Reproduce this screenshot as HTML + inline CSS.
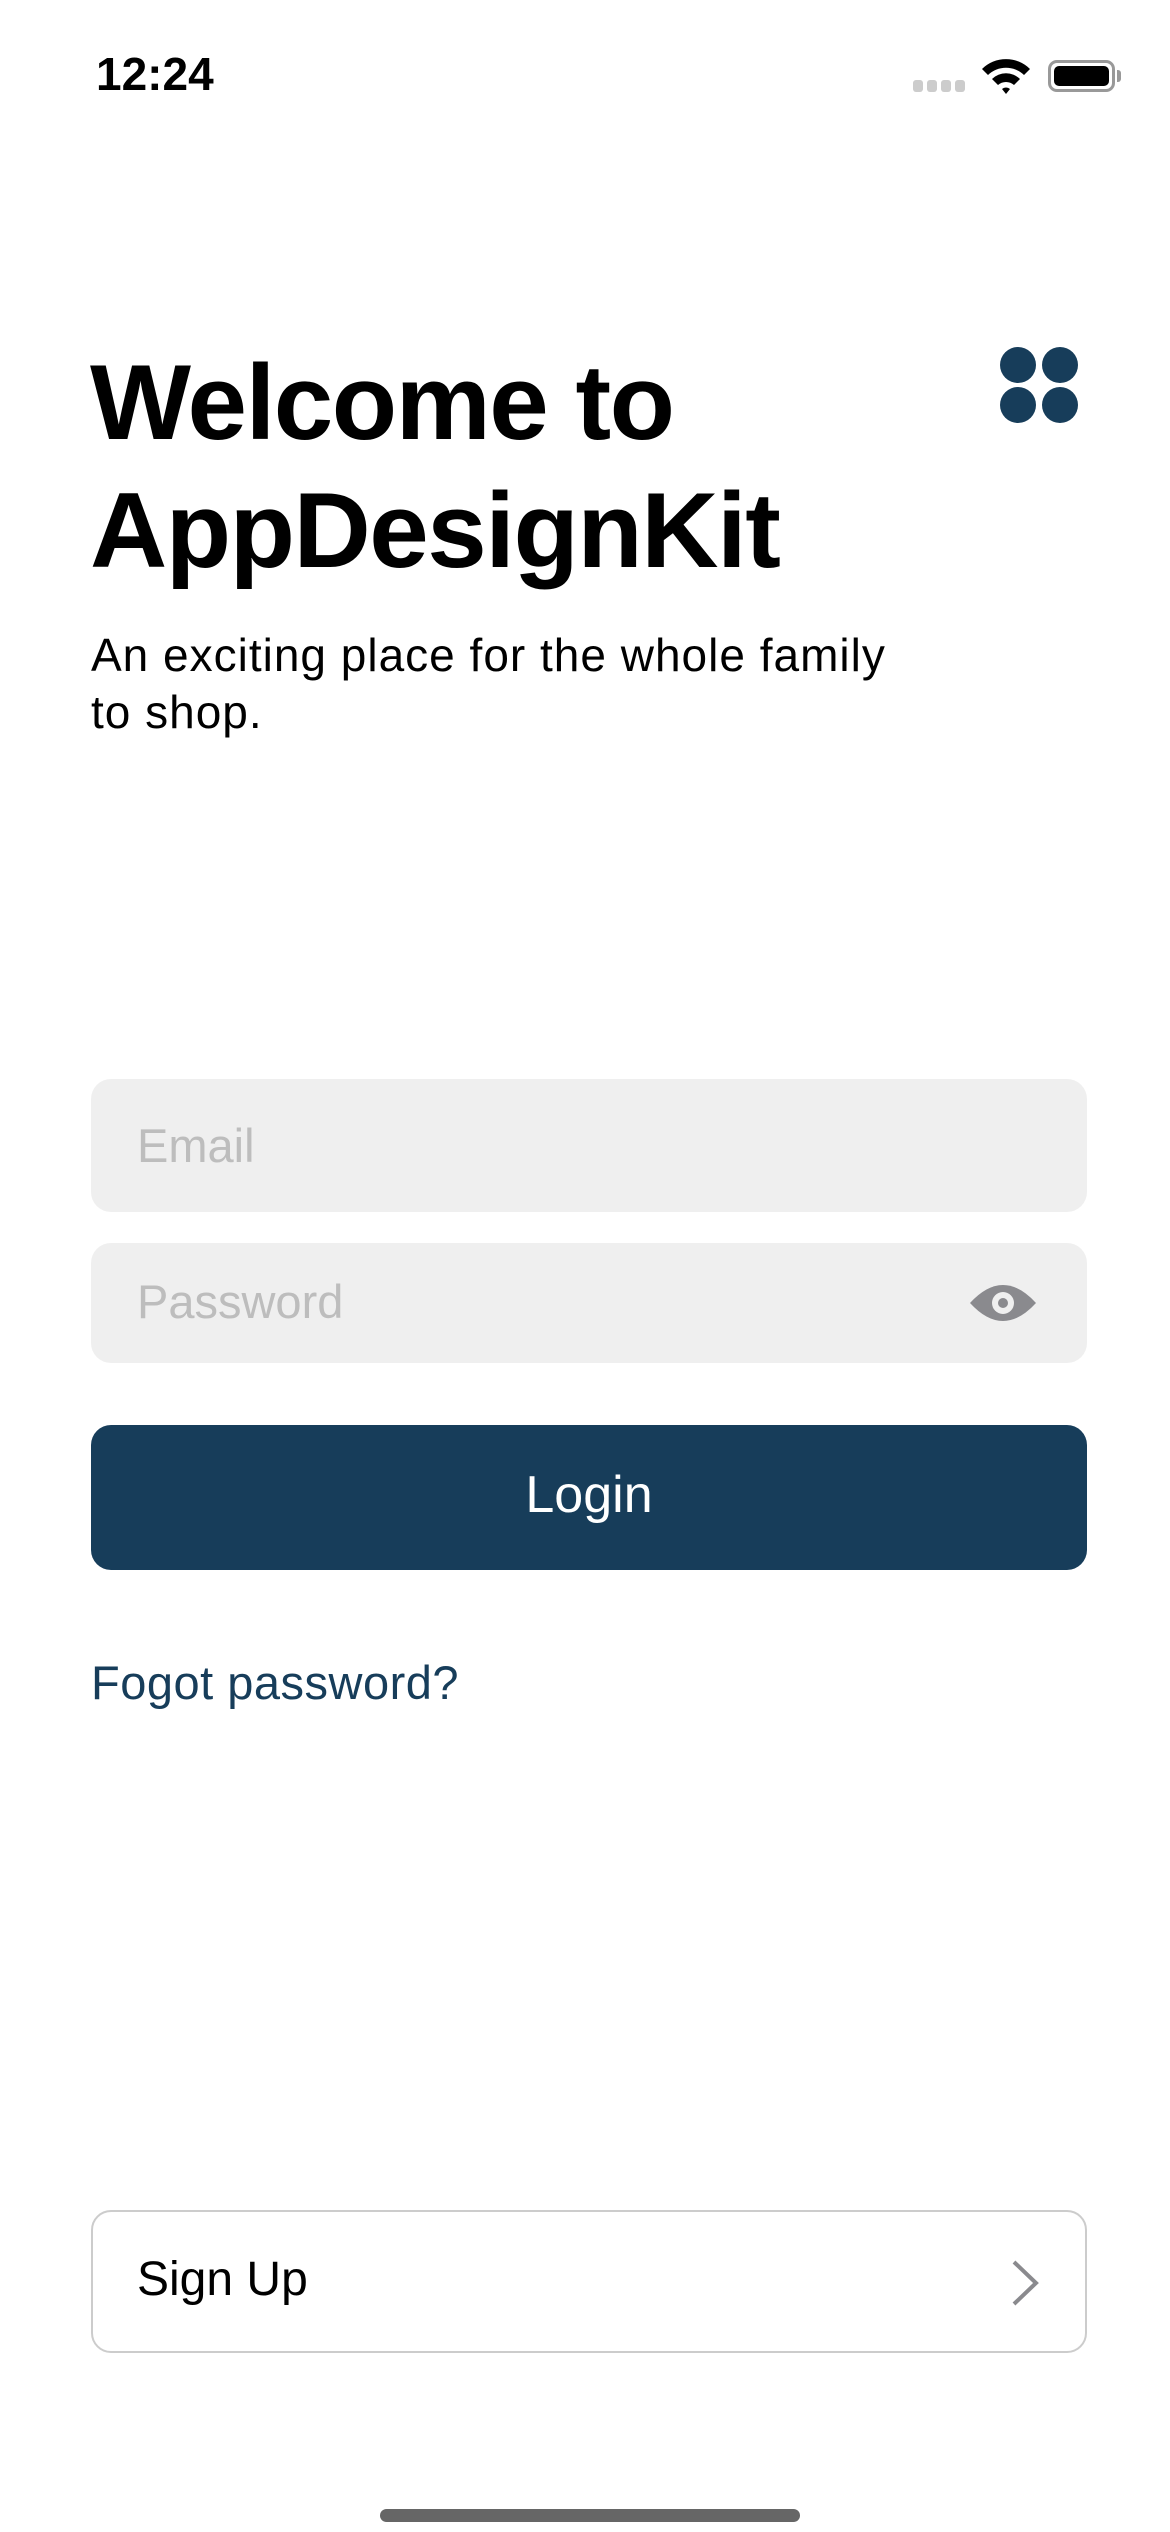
<!DOCTYPE html>
<html><head><meta charset="utf-8"><style>
*{margin:0;padding:0;box-sizing:border-box}
body{width:1170px;height:2532px;background:#fff;position:relative;overflow:hidden;font-family:"Liberation Sans",sans-serif;color:#000}
.a{position:absolute}
</style></head><body>
<div class="a" style="left:96px;top:46px;font-size:46px;font-weight:bold;line-height:56px">12:24</div>
<div class="a" style="left:913px;top:80px;width:52px;height:12px;display:flex;gap:4px">
<div style="flex:1;background:#ccc;border-radius:3px"></div><div style="flex:1;background:#ccc;border-radius:3px"></div><div style="flex:1;background:#ccc;border-radius:3px"></div><div style="flex:1;background:#ccc;border-radius:3px"></div></div>
<svg class="a" style="left:980px;top:56px" width="52" height="38" viewBox="0 0 52 38"><path d="M2 13 A34 34 0 0 1 50 13 L44 19 A26 26 0 0 0 8 19Z M12 23 A20 20 0 0 1 40 23 L34 29 A12 12 0 0 0 18 29Z M22 33 A6 6 0 0 1 30 33 L26 38Z" fill="#000"/></svg>
<div class="a" style="left:1048px;top:60px;width:67px;height:32px;border:3px solid #999;border-radius:9px;padding:3px"><div style="width:100%;height:100%;background:#000;border-radius:5px"></div></div>
<div class="a" style="left:1117px;top:70px;width:4px;height:12px;background:#999;border-radius:0 3px 3px 0"></div>

<div class="a" style="left:90px;top:338px;font-size:107px;font-weight:bold;line-height:128px;letter-spacing:-1.5px">Welcome to<br>AppDesignKit</div>
<svg class="a" style="left:1000px;top:346px" width="80" height="78"><circle cx="18" cy="19" r="18" fill="#173d5a"/><circle cx="60" cy="19" r="18" fill="#173d5a"/><circle cx="18" cy="59" r="18" fill="#173d5a"/><circle cx="60" cy="59" r="18" fill="#173d5a"/></svg>
<div class="a" style="left:91px;top:627px;font-size:46px;line-height:57px;width:900px;letter-spacing:1px">An exciting place for the whole family<br>to shop.</div>

<div class="a" style="left:91px;top:1079px;width:996px;height:133px;background:#efefef;border-radius:20px"></div>
<div class="a" style="left:137px;top:1118px;font-size:47px;line-height:56px;color:#bdbdbd">Email</div>
<div class="a" style="left:91px;top:1243px;width:996px;height:120px;background:#efefef;border-radius:20px"></div>
<div class="a" style="left:137px;top:1274px;font-size:47px;line-height:56px;color:#bdbdbd">Password</div>
<svg class="a" style="left:968px;top:1283px" width="70" height="40" viewBox="0 0 70 40"><path d="M2 20 Q35 -16 68 20 Q35 56 2 20Z" fill="#8a8a8e"/><circle cx="35" cy="20" r="11" fill="#efefef"/><circle cx="35" cy="20" r="5" fill="#8a8a8e"/></svg>

<div class="a" style="left:91px;top:1425px;width:996px;height:145px;background:#173d5a;border-radius:20px;color:#fff;font-size:52px;line-height:140px;text-align:center">Login</div>
<div class="a" style="left:91px;top:1655px;font-size:47px;line-height:56px;color:#173d5a;letter-spacing:0.5px">Fogot password?</div>

<div class="a" style="left:91px;top:2210px;width:996px;height:143px;border:2px solid #ccc;border-radius:20px"></div>
<div class="a" style="left:137px;top:2252px;font-size:48px;line-height:56px">Sign Up</div>
<svg class="a" style="left:1008px;top:2258px" width="34" height="50"><path d="M6 4 L28 25 L6 46" stroke="#8a8a8e" stroke-width="4" fill="none"/></svg>
<div class="a" style="left:380px;top:2509px;width:420px;height:13px;background:#666;border-radius:7px"></div>
</body></html>
